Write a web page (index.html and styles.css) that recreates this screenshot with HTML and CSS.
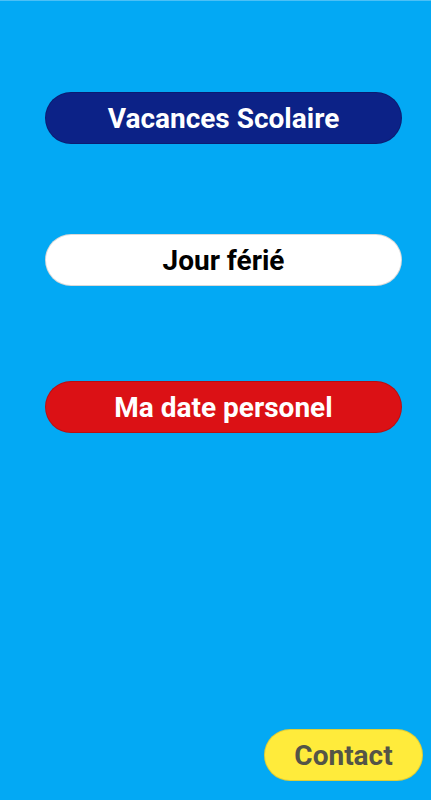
FILE: index.html
```html
<!DOCTYPE html>
<html lang="fr">
<head>
    <meta charset="UTF-8">
    <meta name="viewport" content="width=device-width, initial-scale=1.0">
    <title>Calendrier</title>
    <link rel="stylesheet" href="styles.css">
</head>
<body>

    <div class="screen">
        <div class="menu">
            <button class="menu-btn btn-vacances">Vacances Scolaire</button>
            <button class="menu-btn btn-ferie">Jour férié</button>
            <button class="menu-btn btn-perso">Ma date personel</button>
        </div>
        <div class="footer">
            <button class="contact-btn">Contact</button>
        </div>
    </div>

</body>
</html>
```

FILE: styles.css
```css
html, body {
    margin: 0;
    height: 100%;
}
body {
    font-family: Roboto, "Liberation Sans", sans-serif;
    background-color: #03a9f4;
}
.screen {
    box-sizing: border-box;
    height: 100vh;
    border-top: 1px solid #4cc0f6;
    display: flex;
    flex-direction: column;
}
.menu {
    display: flex;
    flex-direction: column;
    padding: 91px 29px 0 45px;
}
.menu-btn {
    height: 52px;
    border-radius: 26px;
    font-family: inherit;
    font-size: 28px;
    font-weight: bold;
    border: 1px solid rgba(0, 0, 0, 0.15);
    padding: 0;
    cursor: pointer;
}
.btn-vacances {
    background-color: #0c2287;
    color: white;
}
.btn-ferie {
    margin-top: 90px;
    background-color: white;
    color: black;
}
.btn-perso {
    margin-top: 95px;
    background-color: #db1115;
    color: white;
}
.footer {
    margin-top: auto;
    display: flex;
    justify-content: flex-end;
    padding: 0 8px 19px 0;
}
.contact-btn {
    width: 159px;
    height: 52px;
    border-radius: 26px;
    background-color: #ffeb3b;
    color: #545447;
    border: 1px solid rgba(0, 0, 0, 0.12);
    font-family: inherit;
    font-size: 28px;
    font-weight: bold;
    padding: 0;
    cursor: pointer;
}
```
